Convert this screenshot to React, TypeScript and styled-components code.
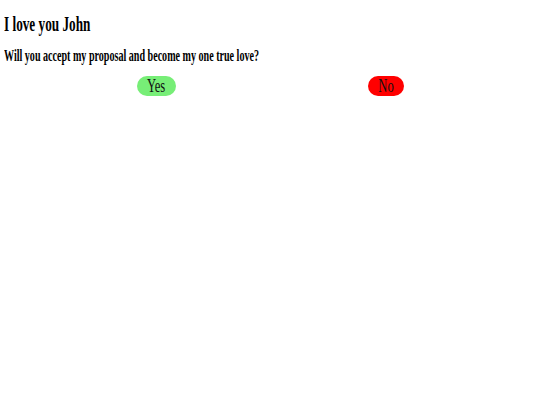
import React from 'react';
import styled, { createGlobalStyle } from 'styled-components';

const GlobalStyle = createGlobalStyle`
  html, body {
    margin: 0;
    padding: 0;
    background: #ffffff;
  }
  body {
    font-family: "Liberation Serif", "Times New Roman", serif;
    color: #000;
  }
`;

const Page = styled.div`
  padding: 0 4px;
`;

const Squeeze = styled.span<{ scale: number }>`
  display: inline-block;
  transform: scaleX(${props => props.scale});
  transform-origin: left center;
  white-space: nowrap;
`;

const Title = styled.h1`
  margin: 13px 0 0;
  font-size: 21px;
  font-weight: bold;
  line-height: 22px;
`;

const Question = styled.h3`
  margin: 12px 0 0;
  font-size: 16px;
  font-weight: bold;
  line-height: 18px;
`;

const Choices = styled.div`
  display: flex;
  justify-content: center;
  gap: 192px;
  margin-top: 11px;
`;

const Choice = styled.button<{ tone: 'yes' | 'no'; w: number }>`
  width: ${props => props.w}px;
  height: 20px;
  padding: 0;
  border: none;
  border-radius: 10px;
  background: ${props => (props.tone === 'yes' ? '#77ee77' : '#ff0000')};
  color: #111;
  font-family: "Liberation Serif", "Times New Roman", serif;
  font-size: 18px;
  line-height: 20px;
  display: flex;
  align-items: center;
  justify-content: center;
  overflow: hidden;
  cursor: pointer;
`;

const ChoiceText = styled.span`
  display: inline-block;
  transform: scaleX(0.7);
`;

export default function App() {
  return (
    <>
      <GlobalStyle />
      <Page>
        <Title>
          <Squeeze scale={0.63}>I love you John</Squeeze>
        </Title>
        <Question>
          <Squeeze scale={0.63}>Will you accept my proposal and become my one true love?</Squeeze>
        </Question>
        <Choices>
          <Choice tone="yes" w={39}>
            <ChoiceText>Yes</ChoiceText>
          </Choice>
          <Choice tone="no" w={36}>
            <ChoiceText>No</ChoiceText>
          </Choice>
        </Choices>
      </Page>
    </>
  );
}
